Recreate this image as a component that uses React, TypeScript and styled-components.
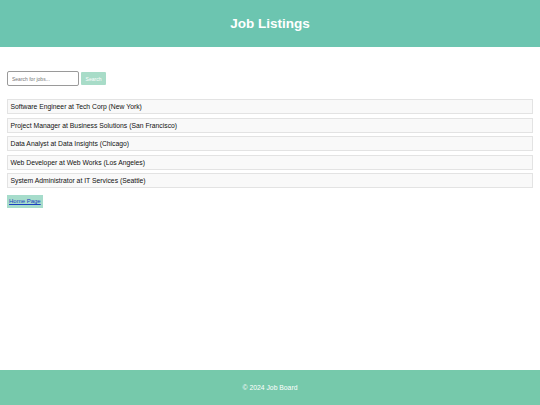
import { useState } from 'react';
import { styled, createGlobalStyle } from 'styled-components';

const jobs = [
  'Software Engineer at Tech Corp (New York)',
  'Project Manager at Business Solutions (San Francisco)',
  'Data Analyst at Data Insights (Chicago)',
  'Web Developer at Web Works (Los Angeles)',
  'System Administrator at IT Services (Seattle)',
];

export default function App() {
  const [query, setQuery] = useState('');

  return (
    <>
      <GlobalStyle />
      <Page>
        <Header>
          <Title>Job Listings</Title>
        </Header>
        <Main>
          <SearchRow>
            <SearchInput
              type='text'
              placeholder='Search for jobs...'
              value={query}
              onChange={e => setQuery(e.target.value)}
            />
            <SearchButton>Search</SearchButton>
          </SearchRow>
          <JobList>
            {jobs.map(job => (
              <JobItem key={job}>{job}</JobItem>
            ))}
          </JobList>
          <HomeButton>
            <a href='#'>Home Page</a>
          </HomeButton>
        </Main>
        <Footer>© 2024 Job Board</Footer>
      </Page>
    </>
  );
}

const GlobalStyle = createGlobalStyle`
  html, body {
    margin: 0;
    padding: 0;
    background: #ffffff;
    font-family: 'Liberation Sans', Arial, sans-serif;
  }
`;

const Page = styled.div`
  display: flex;
  flex-direction: column;
  height: 405px;
`;

const Header = styled.header`
  height: 47px;
  background-color: #6cc5b0;
  display: flex;
  align-items: center;
  justify-content: center;
`;

const Title = styled.h1`
  margin: 0;
  color: #ffffff;
  font-size: 13.5px;
  font-weight: bold;
`;

const Main = styled.main`
  flex: 1;
  padding: 24px 7px 0;
  display: flex;
  flex-direction: column;
  align-items: flex-start;
`;

const SearchRow = styled.div`
  display: flex;
  align-items: center;
  gap: 2px;
`;

const SearchInput = styled.input`
  box-sizing: border-box;
  width: 72px;
  height: 15px;
  padding: 0 4px;
  border: 1px solid #9a9a9a;
  border-radius: 2px;
  font-family: inherit;
  font-size: 5px;
  outline: none;

  &::placeholder {
    color: #777777;
  }
`;

const SearchButton = styled.button`
  box-sizing: border-box;
  height: 13px;
  width: 25px;
  padding: 0;
  border: none;
  border-radius: 1px;
  background-color: #a8dcc8;
  color: #ffffff;
  font-family: inherit;
  font-size: 5px;
`;

const JobList = styled.ul`
  list-style: none;
  margin: 13px 0 0;
  padding: 0;
  width: 100%;
  display: flex;
  flex-direction: column;
  gap: 3.5px;
`;

const JobItem = styled.li`
  box-sizing: border-box;
  height: 15px;
  padding: 0 2.5px;
  display: flex;
  align-items: center;
  background-color: #f9f9f9;
  border: 1px solid #e3e3e3;
  color: #111111;
  font-size: 6.8px;
`;

const HomeButton = styled.div`
  margin-top: 6.5px;
  height: 13.5px;
  padding: 0 2px;
  display: flex;
  align-items: center;
  background-color: #a6dccb;

  a {
    color: #1a3fbf;
    font-size: 6px;
  }
`;

const Footer = styled.footer`
  height: 35px;
  background-color: #76c9ab;
  color: #ffffff;
  font-size: 6.8px;
  display: flex;
  align-items: center;
  justify-content: center;
`;
